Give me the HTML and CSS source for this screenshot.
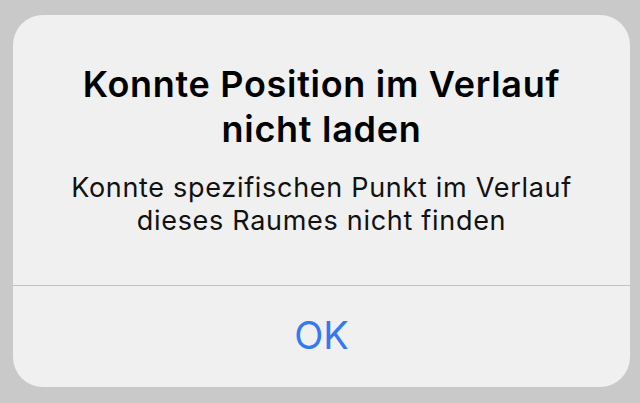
FILE: index.html
```html
<!DOCTYPE html>
<html>
<head>
  <title>Konnte Position im Verlauf nicht laden</title>
  <link rel="stylesheet" href="styles.css">
</head>
<body>
  <div class="alert">
    <div class="alert-body">
      <h1 class="alert-title">Konnte Position im Verlauf nicht laden</h1>
      <p class="alert-message">Konnte spezifischen Punkt im Verlauf dieses Raumes nicht finden</p>
    </div>
    <button class="alert-button" type="button">OK</button>
  </div>
</body>
</html>
```

FILE: styles.css
```css
html,
body {
  margin: 0;
  height: 100%;
}

body {
  background-color: #c9c9c9;
  font-family: Inter, "Noto Sans", sans-serif;
  padding: 15px 10px 0 13px;
  box-sizing: border-box;
}

.alert {
  width: 617px;
  height: 372px;
  background-color: #f0f0f0;
  border-radius: 30px;
  display: flex;
  flex-direction: column;
  overflow: hidden;
}

.alert-body {
  height: 271px;
  padding: 47px 30px 0;
  box-sizing: border-box;
  border-bottom: 1px solid #c2c2c2;
  text-align: center;
}

.alert-title {
  margin: 0;
  font-size: 36px;
  font-weight: 600;
  line-height: 45px;
  letter-spacing: 0.7px;
  color: #000;
}

.alert-message {
  margin: 19px 0 0;
  font-size: 27px;
  font-weight: 400;
  line-height: 33px;
  letter-spacing: 0.7px;
  color: #111;
}

.alert-button {
  flex: 1;
  border: none;
  background: none;
  font-family: inherit;
  font-size: 38px;
  color: #3479f2;
  padding: 0 0 4px;
}
```
